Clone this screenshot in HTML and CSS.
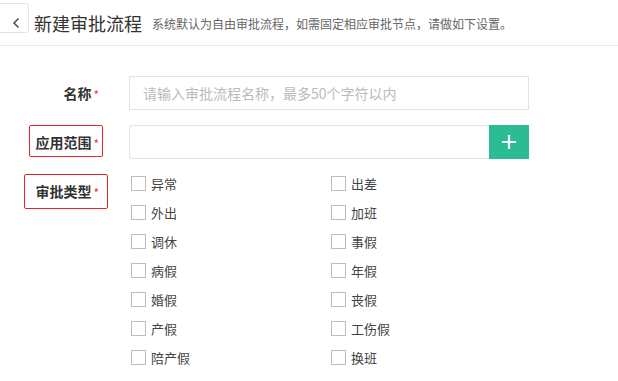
FILE: index.html
```html
<!DOCTYPE html>
<html lang="zh-CN">
<head>
  <meta charset="UTF-8" />
  <title>新建审批流程</title>
  <link rel="stylesheet" href="styles.css">
</head>
<body>

<header class="page-head">
  <button class="back-btn" type="button">
    <svg width="10" height="12" viewBox="0 0 10 12"><path d="M6.5 1.5 L2 6 L6.5 10.5" fill="none" stroke="#555" stroke-width="1.6"/></svg>
  </button>
  <h1>新建审批流程</h1>
  <span class="sub">系统默认为自由审批流程，如需固定相应审批节点，请做如下设置。</span>
</header>

<main class="form">
  <div class="row">
    <div class="row-label"><span>名称<i>*</i></span></div>
    <input class="text-input" type="text" placeholder="请输入审批流程名称，最多50个字符以内">
  </div>

  <div class="row row-scope">
    <div class="row-label"><span class="marked m1">应用范围<i>*</i></span></div>
    <div class="input-group">
      <input class="text-input" type="text">
      <button class="add-btn" type="button">
        <svg width="14" height="14" viewBox="0 0 14 14"><path d="M7 0 V14 M0 7 H14" stroke="#fff" stroke-width="2.2"/></svg>
      </button>
    </div>
  </div>

  <div class="row">
    <div class="row-label lbl-types"><span class="marked m2">审批类型<i>*</i></span></div>
    <div class="check-grid">
      <label class="check"><span class="box"></span>异常</label>
      <label class="check"><span class="box"></span>出差</label>
      <label class="check"><span class="box"></span>外出</label>
      <label class="check"><span class="box"></span>加班</label>
      <label class="check"><span class="box"></span>调休</label>
      <label class="check"><span class="box"></span>事假</label>
      <label class="check"><span class="box"></span>病假</label>
      <label class="check"><span class="box"></span>年假</label>
      <label class="check"><span class="box"></span>婚假</label>
      <label class="check"><span class="box"></span>丧假</label>
      <label class="check"><span class="box"></span>产假</label>
      <label class="check"><span class="box"></span>工伤假</label>
      <label class="check"><span class="box"></span>陪产假</label>
      <label class="check"><span class="box"></span>换班</label>
    </div>
  </div>
</main>

</body>
</html>
```

FILE: styles.css
```css
body {
  margin: 0;
  font-family: "Noto Sans CJK SC", "Noto Sans", sans-serif;
  background-color: #fff;
  color: #333;
  overflow: hidden;
}

.page-head {
  height: 45px;
  border-bottom: 1px solid #e8e8e8;
  display: flex;
  align-items: center;
}

.back-btn {
  align-self: flex-start;
  margin: 3px 0 0 -3px;
  width: 32px;
  height: 30px;
  box-sizing: border-box;
  padding: 13px 0 0 7px;
  background: #fff;
  border: 1px solid #e3e3e3;
  border-radius: 3px;
  display: flex;
  align-items: flex-start;
  justify-content: center;
}

.back-btn svg {
  display: block;
}

.page-head h1 {
  margin: 0 0 0 5px;
  font-size: 18px;
  font-weight: normal;
  line-height: 24px;
  color: #333;
}

.page-head .sub {
  margin-left: 10px;
  font-size: 12px;
  color: #666;
  line-height: 24px;
  padding-top: 2px;
}

.form {
  padding-top: 30px;
}

.row {
  display: flex;
  margin-bottom: 15px;
}

.row-scope {
  margin-bottom: 10px;
}

.row-label {
  width: 129px;
  flex: none;
  box-sizing: border-box;
  padding: 7px 30px 0 0;
  text-align: right;
  font-size: 14px;
  font-weight: bold;
  color: #333;
}

.row-label span {
  display: inline-block;
  line-height: 20px;
}

.row-label i {
  font-style: normal;
  font-weight: normal;
  font-size: 12px;
  color: #e84040;
  margin-left: 2px;
  vertical-align: -1px;
}

.lbl-types {
  padding-top: 12px;
}

.marked {
  border: 1px solid #e42828;
  border-radius: 2px;
}

.m1 {
  padding: 6px 3px 2px 5px;
  margin: -7px -4px -3px -6px;
}

.m2 {
  padding: 6px 8px 5px 10px;
  margin: -7px -9px -6px -11px;
}

.text-input {
  width: 400px;
  height: 34px;
  box-sizing: border-box;
  border: 1px solid #e2e2e2;
  padding: 0 13px;
  font-family: inherit;
  font-size: 14px;
  color: #333;
  outline: none;
}

.text-input::placeholder {
  color: #bbb;
}

.input-group {
  display: flex;
  width: 400px;
}

.input-group .text-input {
  flex: 1;
  width: auto;
  border-radius: 3px 0 0 3px;
  border-right: none;
}

.add-btn {
  width: 40px;
  height: 34px;
  border: none;
  background-color: #2bbc96;
  display: flex;
  align-items: center;
  justify-content: center;
  padding: 0;
}

.check-grid {
  display: grid;
  grid-template-columns: 200px 200px;
  grid-auto-rows: 29px;
  margin-left: 2px;
}

.check {
  display: flex;
  align-items: center;
  font-size: 13px;
  color: #444;
}

.check .box {
  width: 13px;
  height: 13px;
  border: 1px solid #bdbdbd;
  margin-right: 5px;
}
```
